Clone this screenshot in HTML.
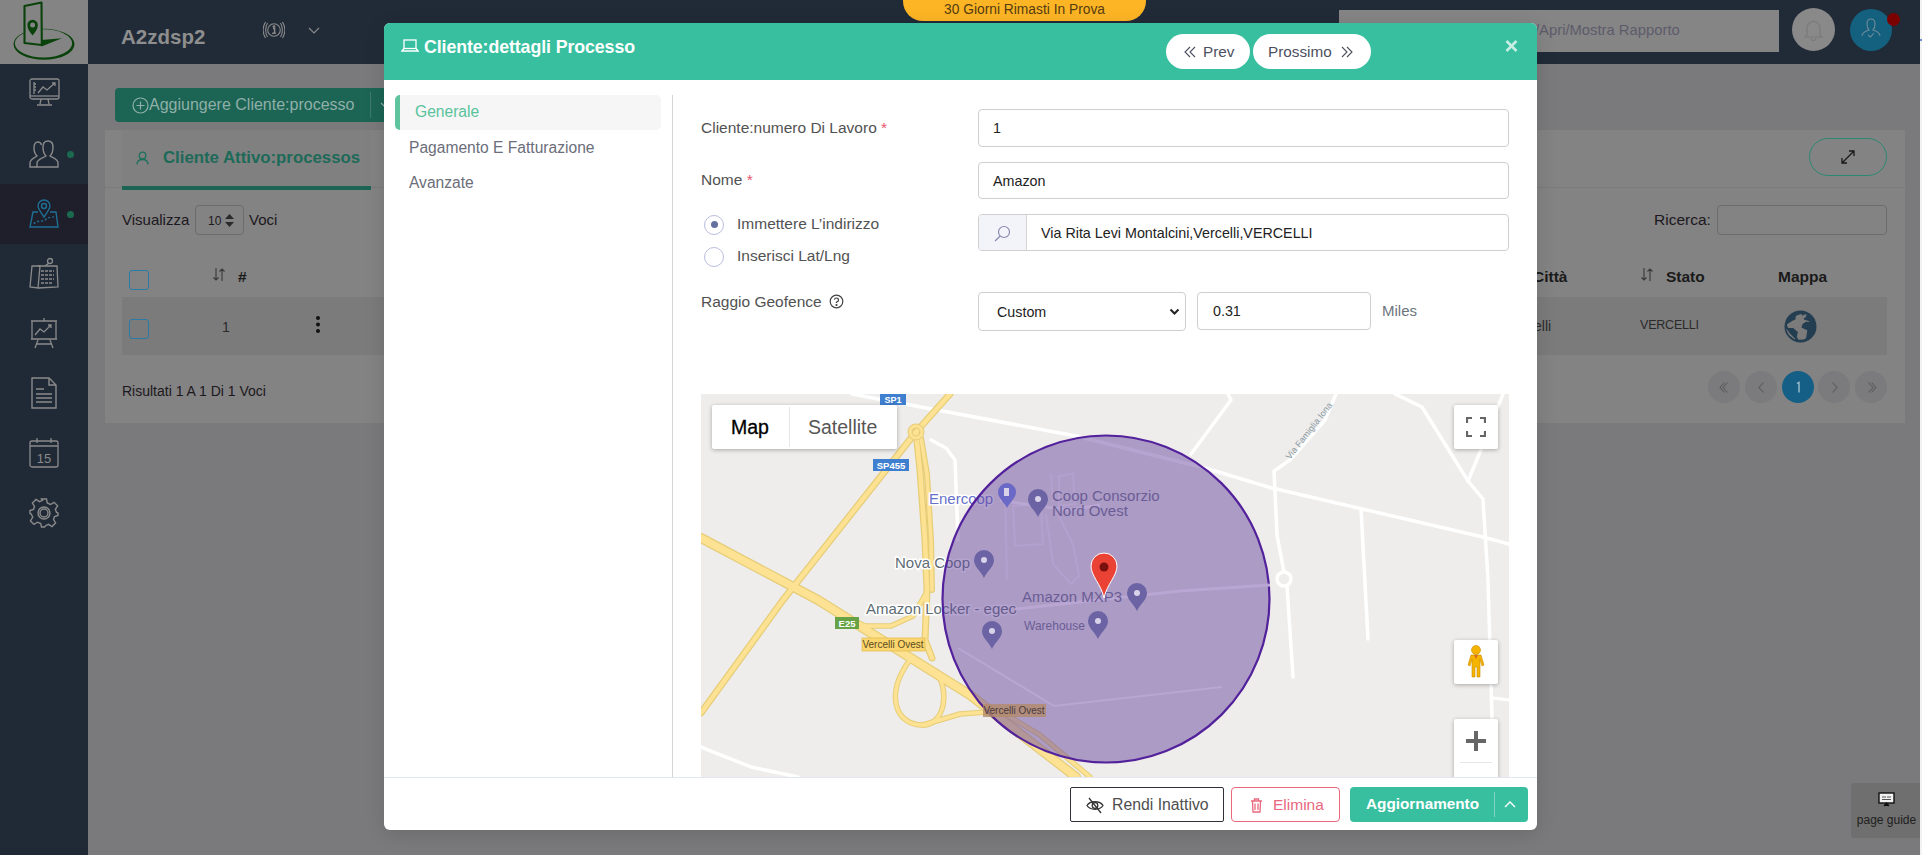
<!DOCTYPE html>
<html><head><meta charset="utf-8">
<style>
*{margin:0;padding:0;box-sizing:border-box}
html,body{width:1922px;height:855px;overflow:hidden}
body{position:relative;background:#7a7a7c;font-family:"Liberation Sans",sans-serif;color:#222}
.a{position:absolute}
#side{left:0;top:0;width:88px;height:855px;background:#202a37}
#logo{left:0;top:0;width:88px;height:64px;background:#848484}
#top{left:88px;top:0;width:1832px;height:64px;background:#212b38}
.sic{position:absolute;left:0;width:88px;height:60px}
.dot{position:absolute;width:7px;height:7px;border-radius:50%;background:#1b6a50}
#card{left:105px;top:130px;width:1800px;height:293px;background:#838383}
#modal{left:384px;top:23px;width:1153px;height:807px;background:#fff;border-radius:6px;overflow:hidden;box-shadow:0 4px 20px rgba(0,0,0,0.12)}
#mh{left:0;top:0;width:1153px;height:57px;background:#37bfa0}
.pg{width:32px;height:32px;border-radius:50%;background:#7b7b7d}
.pg span{position:absolute;left:0;top:5px;width:33px;text-align:center;font-size:18px;color:#6d6d6d}
.pill{height:35px;border-radius:18px;background:#fff}
.pill span{position:absolute;top:9px;font-size:15.3px;color:#4d5060;white-space:nowrap}
.nav{font-size:15.6px;color:#6b6e7a;white-space:nowrap}
.lbl{font-size:15.5px;color:#525252;white-space:nowrap}
.req{color:#e8546a}
.radio{width:20px;height:20px;border:1.2px solid #b9bddb;border-radius:50%}
.inp{border:1px solid #cfcfcf;border-radius:4px;background:#fff}
.inp span{position:absolute;top:10px;font-size:14.3px;color:#222;white-space:nowrap}
.mctl{background:#fff;border-radius:2px;box-shadow:0 1px 4px rgba(0,0,0,0.3)}
</style></head><body>
<div id="side" class="a">
 <div class="sic" style="top:64px"><svg class="a" style="left:29px;top:14px" width="31" height="30" viewBox="0 0 31 30" fill="none" stroke="#8a8a8a" stroke-width="1.3"><rect x="1" y="1" width="29" height="20" rx="2"/><line x1="1" y1="18" x2="30" y2="18"/><path d="M12 21 L11 26 M19 21 L20 26 M8 27 H23"/><path d="M9 15 L14 9 L18 12 L26 5 M23 5 H26 V8"/><path d="M5 4 V16 M5 6 H7 M5 9 H7 M5 12 H7"/></svg></div>
 <div class="sic" style="top:124px"><svg class="a" style="left:29px;top:16px" width="30" height="28" viewBox="0 0 30 28" fill="none" stroke="#8a8a8a" stroke-width="1.4"><path d="M8 27 H1 V23 C1 19 5 18 8 16 C6 14 5 12 5 8 C5 3 7 2 9 2 C11 2 12 3 12.5 5"/><path d="M8 27 H29 V23 C29 19 24 18 21 16 C23 14 24 11 24 7 C24 2 21 1 19 1 C16 1 14 3 14 7 C14 11 15 14 17 16 C14 18 8 19 8 23 Z"/></svg><div class="dot" style="left:67px;top:27px"></div></div>
 <div class="sic" style="top:184px;background:#1e1f2b"><svg class="a" style="left:29px;top:15px" width="31" height="30" viewBox="0 0 31 30" fill="none" stroke="#1f6f95" stroke-width="1.4"><path d="M15 18 C10 11 9 9 9 7 A6 6 0 0 1 21 7 C21 9 20 11 15 18 Z"/><circle cx="15" cy="7" r="2.5"/><path d="M9 13 H4 L1 28 H29 L27 13 H21"/><path d="M5 25 C8 20 14 24 17 20 C20 17 24 20 26 16" stroke-dasharray="2 2"/></svg><div class="dot" style="left:67px;top:27px"></div></div>
 <div class="sic" style="top:244px"><svg class="a" style="left:29px;top:13px" width="30" height="34" viewBox="0 0 30 34" fill="none" stroke="#8a8a8a" stroke-width="1.3"><path d="M3 9 L1 30 L9 31 L11 9 Z"/><path d="M9 9 H28 L29 30 L9 31"/><circle cx="21" cy="4" r="2.5"/><path d="M20 6 L16 9"/><path d="M12 14 H25 M12 18 H25 M12 22 H25 M12 26 H23" stroke-dasharray="3 1"/></svg></div>
 <div class="sic" style="top:304px"><svg class="a" style="left:29px;top:13px" width="30" height="32" viewBox="0 0 30 32" fill="none" stroke="#8a8a8a" stroke-width="1.3"><path d="M15 1 V4"/><path d="M2 4 H28 M3 4 V22 H27 V4 M2 22 H28"/><path d="M6 18 L11 12 L15 15 L22 8 M19 8 H22 V11"/><path d="M9 23 L6 31 M21 23 L24 31 M8 27 H22"/></svg></div>
 <div class="sic" style="top:364px"><svg class="a" style="left:31px;top:13px" width="26" height="32" viewBox="0 0 26 32" fill="none" stroke="#8a8a8a" stroke-width="1.4"><path d="M1 1 H18 L25 8 V31 H1 Z"/><path d="M18 1 V8 H25"/><path d="M5 12 H13 M5 17 H21 M5 21 H21 M5 25 H21"/></svg></div>
 <div class="sic" style="top:424px"><svg class="a" style="left:29px;top:13px" width="30" height="32" viewBox="0 0 30 32" fill="none" stroke="#8a8a8a" stroke-width="1.3"><rect x="1" y="4" width="28" height="26" rx="2"/><path d="M1 9 H29 M8 1 V6 M22 1 V6"/><text x="15" y="26" font-family="Liberation Sans" font-size="13" fill="#8a8a8a" stroke="none" text-anchor="middle">15</text></svg></div>
 <div class="sic" style="top:484px"><svg class="a" style="left:29px;top:14px" width="30" height="30" viewBox="0 0 30 30" fill="none" stroke="#8a8a8a" stroke-width="1.4"><path d="M12.5 1 H17.5 L18.3 5 L21.5 6.5 L25 4.3 L28.6 7.8 L26.3 11.3 L27.6 14.4 L29 15 V17.5 L25.5 18.5 L24.5 21.5 L26.6 25 L23 28.6 L19.5 26.4 L16.5 27.7 L15.5 29 H12.5 L11.7 25.5 L8.5 24.2 L5 26.4 L1.4 22.8 L3.7 19.3 L2.4 16.2 L1 15.5 V12.5 L4.5 11.5 L5.5 8.5 L3.4 5 L7 1.4 L10.5 3.6 L13.5 2.3 Z"/><circle cx="15" cy="15" r="6"/><circle cx="15" cy="15" r="4"/></svg></div>
</div>
<div id="logo" class="a"><svg class="a" style="left:12px;top:0px" width="64" height="62" viewBox="0 0 64 62"><path fill-rule="evenodd" fill="#0a420b" d="M1.5 44.2 A30.5 15.5 0 1 0 62.5 44.2 A30.5 15.5 0 1 0 1.5 44.2 Z M2.9 43.4 A28.6 14.1 0 1 0 60.1 43.4 A28.6 14.1 0 1 0 2.9 43.4 Z"/><path d="M12.5 6 L29.5 2.5 L29.8 45 L12.5 43 Z" fill="#848484" stroke="#0a420b" stroke-width="2.1" stroke-linejoin="round"/><path d="M29.5 40 L50 38.3 L29.5 46.5 Z" fill="#0a420b"/><path d="M20.6 35.6 C17.5 31.5 15.4 29 15.4 25 A5.2 5.2 0 0 1 25.8 25 C25.8 29 23.7 31.5 20.6 35.6 Z" fill="#0a420b"/><circle cx="20.6" cy="25" r="2.5" fill="#848484"/></svg></div>
<div id="top" class="a">
 <div class="a" style="left:33px;top:25px;font-size:20.5px;font-weight:bold;color:#8e8e8e;letter-spacing:0px">A2zdsp2</div>
 <svg class="a" style="left:175px;top:19px" width="22" height="22" viewBox="0 0 22 22" fill="none" stroke="#8a8a8a" stroke-width="1.1"><circle cx="11" cy="11" r="6.3"/><path d="M4.5 4 C2 8 2 14 4.5 18 M17.5 4 C20 8 20 14 17.5 18 M2.5 3 C-0.5 8 -0.5 14 2.5 19 M19.5 3 C22.5 8 22.5 14 19.5 19"/><circle cx="11" cy="7.6" r="0.9" fill="#8a8a8a"/><path d="M10 9.5 H11.6 V14 M9.2 14.3 H12.8" stroke-width="1.4"/></svg>
 <svg class="a" style="left:220px;top:27px" width="12" height="8" viewBox="0 0 12 8" fill="none" stroke="#8a8a8a" stroke-width="1.2"><path d="M1 1 L6 6 L11 1"/></svg>
 <div class="a" style="left:1251px;top:10px;width:440px;height:42px;background:#858585"><div class="a" style="left:196px;top:12px;font-size:14.8px;color:#5d5b6b;white-space:nowrap">/Apri/Mostra Rapporto</div></div>
 <div class="a" style="left:1704px;top:8px;width:43px;height:43px;border-radius:50%;background:#898989"><svg class="a" style="left:11px;top:11px" width="21" height="22" viewBox="0 0 21 22" fill="none" stroke="#7a7a7a" stroke-width="1.2"><path d="M10.5 1 V3 M4 16 V9 A6.5 6.5 0 0 1 17 9 V16 L19 18 H2 L4 16 Z M8 19 A2.5 2.5 0 0 0 13 19"/></svg></div>
 <div class="a" style="left:1762px;top:9px;width:42px;height:42px;border-radius:50%;background:#14607f"><svg class="a" style="left:11px;top:9px" width="20" height="22" viewBox="0 0 20 22" fill="none" stroke="#6e8c98" stroke-width="1.1"><path d="M10 1 C7 1 6 3 6 6 C6 9 7 11 8 12 C6 13 1 14 1 18 M10 1 C13 1 14 3 14 6 C14 9 13 11 12 12 C14 13 19 14 19 18"/><path d="M7 17 L9.5 19 L13 15"/></svg></div>
 <div class="a" style="left:1799px;top:13px;width:13px;height:13px;border-radius:50%;background:#7b0000"></div>
</div>
<div class="a" style="left:1920px;top:0;width:2px;height:855px;background:#f2f2f2"></div><div class="a" style="left:1920px;top:39px;width:2px;height:2px;background:#6a8fd6"></div>
<div class="a" style="left:903px;top:-20px;width:243px;height:41px;border-radius:0 0 20px 20px;background:#fdb525"><div class="a" style="left:0;top:22px;width:243px;text-align:center;font-size:13.8px;color:#553c10">30 Giorni Rimasti In Prova</div></div>

<div class="a" style="left:115px;top:88px;width:300px;height:34px;border-radius:4px;background:#1c6454"><svg class="a" style="left:17px;top:9px" width="17" height="17" viewBox="0 0 17 17" fill="none" stroke="#8fb0a8" stroke-width="1.2"><circle cx="8.5" cy="8.5" r="7.5"/><path d="M8.5 4.5 V12.5 M4.5 8.5 H12.5"/></svg><div class="a" style="left:34px;top:8px;font-size:16px;color:#8fb0a8;white-space:nowrap">Aggiungere Cliente:processo</div><div class="a" style="left:255px;top:4px;width:1px;height:26px;background:#3f7a6c"></div><svg class="a" style="left:265px;top:14px" width="10" height="7" viewBox="0 0 10 7" fill="none" stroke="#8fb0a8" stroke-width="1.1"><path d="M1 1 L5 5 L9 1"/></svg></div>
<div id="card" class="a">
 <div class="a" style="left:17px;top:0;width:249px;height:59px;background:#808080"></div>
 <div class="a" style="left:0;top:57px;width:1800px;height:1px;background:#7a7a7a"></div>
 <div class="a" style="left:17px;top:56px;width:249px;height:4px;background:#1c6454"></div>
 <svg class="a" style="left:31px;top:21px" width="13" height="14" viewBox="0 0 13 14" fill="none" stroke="#1d6f5a" stroke-width="1.3"><circle cx="6.5" cy="4.5" r="3.3"/><path d="M1 13.5 C1 9.5 3.5 8.5 6.5 8.5 C9.5 8.5 12 9.5 12 13.5"/></svg>
 <div class="a" style="left:58px;top:18px;font-size:16.8px;font-weight:bold;color:#1d6a58;white-space:nowrap">Cliente Attivo:processos</div>
 <div class="a" style="left:1704px;top:8px;width:78px;height:38px;border-radius:19px;border:1.3px solid #2a8870"><svg class="a" style="left:30px;top:10px" width="16" height="16" viewBox="0 0 16 16" fill="none" stroke="#1a1a1a" stroke-width="1.3"><path d="M2 14 L14 2 M9 2 H14 V7 M2 9 V14 H7"/></svg></div>
 <div class="a" style="left:17px;top:80.5px;font-size:15px;color:#1c1820">Visualizza</div>
 <div class="a" style="left:90px;top:75px;width:49px;height:30px;border:1px solid #6c6c6c;border-radius:4px"><div class="a" style="left:12px;top:8px;font-size:12px;color:#1c1820">10</div><svg class="a" style="left:29px;top:8px" width="9" height="13" viewBox="0 0 9 13" fill="#2a2a2a"><path d="M4.5 0 L9 5 H0 Z M0 8 H9 L4.5 13 Z"/></svg></div>
 <div class="a" style="left:144px;top:80.5px;font-size:15px;color:#1c1820">Voci</div>
 <div class="a" style="left:1549px;top:80.5px;font-size:15.5px;color:#1c1820">Ricerca:</div>
 <div class="a" style="left:1612px;top:75px;width:170px;height:30px;border:1px solid #6c6c6c;border-radius:4px"></div>
 <div class="a" style="left:24px;top:140px;width:20px;height:20px;border:1.5px solid #2a7aa8;border-radius:3px"></div>
 <svg class="a" style="left:107px;top:137px" width="14" height="15" viewBox="0 0 14 15" fill="none" stroke="#3a3a3a" stroke-width="1.1"><path d="M4 1 V13 M1.5 10.5 L4 13 L6.5 10.5 M10 14 V2 M7.5 4.5 L10 2 L12.5 4.5"/></svg>
 <div class="a" style="left:133px;top:138px;font-size:15.5px;font-weight:bold;color:#1a1a1a">#</div>
 <div class="a" style="left:1428px;top:138px;font-size:15.5px;font-weight:bold;color:#1a1a1a">Città</div>
 <svg class="a" style="left:1535px;top:137px" width="14" height="15" viewBox="0 0 14 15" fill="none" stroke="#3a3a3a" stroke-width="1.1"><path d="M4 1 V13 M1.5 10.5 L4 13 L6.5 10.5 M10 14 V2 M7.5 4.5 L10 2 L12.5 4.5"/></svg>
 <div class="a" style="left:1561px;top:138px;font-size:15.5px;font-weight:bold;color:#1a1a1a">Stato</div>
 <div class="a" style="left:1673px;top:138px;font-size:15.5px;font-weight:bold;color:#1a1a1a">Mappa</div>
 <div class="a" style="left:17px;top:167px;width:1765px;height:58px;background:#7b7b7b"></div>
 <div class="a" style="left:24px;top:189px;width:20px;height:20px;border:1.5px solid #2a7aa8;border-radius:3px"></div>
 <div class="a" style="left:117px;top:189px;font-size:14px;color:#2a2a2a">1</div>
 <svg class="a" style="left:210px;top:185px" width="6" height="19" viewBox="0 0 6 19" fill="#111"><circle cx="3" cy="3" r="2"/><circle cx="3" cy="9.5" r="2"/><circle cx="3" cy="16" r="2"/></svg>
 <div class="a" style="left:1422px;top:188px;font-size:14px;color:#2a2a2a">celli</div>
 <div class="a" style="left:1535px;top:188px;font-size:12.5px;color:#2a2a2a;letter-spacing:-0.2px">VERCELLI</div>
 <svg class="a" style="left:1678.5px;top:179.5px" width="33" height="33" viewBox="0 0 33 33"><circle cx="16.5" cy="16.5" r="16" fill="#243e51"/><path d="M2.8 14.5 L8.1 11 L11.6 9.2 L11.6 6.3 L13.9 5.1 L17.4 3.95 L18.6 5.7 L20.4 4.5 L22.7 4.5 L21.5 7.5 L19.8 8 L20.1 9.8 L23.3 10.4 L26.2 12.1 L22.1 11.8 L18.6 13.9 L17.4 17.4 L20.9 19.2 L23.3 20.3 L22.1 27.9 L19.8 29.4 L14.5 29.7 L12.8 26.8 L13.9 22.1 L9.2 18 L4 18 Z" fill="#7b7b7b"/><path d="M2.3 18.5 L5.7 23.2 L11.3 29 L10.2 29.2 L5 25 L2.8 21 Z" fill="#7b7b7b"/></svg>
 <div class="a" style="left:17px;top:253px;font-size:14px;color:#1c1820">Risultati 1 A 1 Di 1 Voci</div>
 <div class="a pg" style="left:1603px;top:241px"><svg class="a" style="left:8px;top:8px" width="17" height="17" viewBox="0 0 17 17" fill="none" stroke="#5c5c5e" stroke-width="1.1"><path d="M8.5 3.5 L4 8.5 L8.5 13.5 M11.5 3.5 L7 8.5 L11.5 13.5"/></svg></div><div class="a pg" style="left:1640px;top:241px"><svg class="a" style="left:8px;top:8px" width="17" height="17" viewBox="0 0 17 17" fill="none" stroke="#5c5c5e" stroke-width="1.1"><path d="M10.5 3.5 L6 8.5 L10.5 13.5"/></svg></div><div class="a pg" style="left:1677px;top:241px;background:#155f86"><svg class="a" style="left:8px;top:8px" width="17" height="17" viewBox="0 0 17 17" fill="none" stroke="#8fb3c6" stroke-width="1.6"><path d="M7 4.5 L9 3.5 V13.5"/></svg></div><div class="a pg" style="left:1713px;top:241px"><svg class="a" style="left:8px;top:8px" width="17" height="17" viewBox="0 0 17 17" fill="none" stroke="#5c5c5e" stroke-width="1.1"><path d="M6.5 3.5 L11 8.5 L6.5 13.5"/></svg></div><div class="a pg" style="left:1750px;top:241px"><svg class="a" style="left:8px;top:8px" width="17" height="17" viewBox="0 0 17 17" fill="none" stroke="#5c5c5e" stroke-width="1.1"><path d="M5.5 3.5 L10 8.5 L5.5 13.5 M8.5 3.5 L13 8.5 L8.5 13.5"/></svg></div>
</div>
<div class="a" style="left:1851px;top:783px;width:69px;height:55px;background:#6f6f6f;border-radius:3px 0 0 3px"><svg class="a" style="left:27px;top:9px" width="17" height="15" viewBox="0 0 17 15"><rect x="1" y="1" width="15" height="10" fill="#f2f2f2" stroke="#111" stroke-width="1.4"/><path d="M4 5 H8 M9 5 H13 M4 7.5 H13" stroke="#555" stroke-width="1"/><path d="M8.5 11 V14 M6 14 L8.5 11 L11 14" stroke="#111" stroke-width="1.2"/></svg><div class="a" style="left:0;top:30px;width:71px;text-align:center;font-size:12px;color:#1e1e1e;white-space:nowrap">page guide</div></div>

<div id="modal" class="a">
  <div id="mh" class="a">
   <svg class="a" style="left:17px;top:16px" width="18" height="13" viewBox="0 0 18 13" fill="none" stroke="#fff" stroke-width="1.3"><rect x="3" y="1" width="12" height="8.5"/><path d="M3 9.5 L0.8 12 H17.2 L15 9.5"/></svg>
   <div class="a" style="left:40px;top:14px;font-size:17.8px;font-weight:bold;color:#fff;white-space:nowrap;letter-spacing:-0.1px">Cliente:dettagli Processo</div>
   <div class="a pill" style="left:782px;top:11px;width:84px"><svg class="a" style="left:18px;top:12px" width="12" height="12" viewBox="0 0 12 12" fill="none" stroke="#4d5060" stroke-width="1.1"><path d="M6 1 L1 6 L6 11 M11 1 L6 6 L11 11"/></svg><span style="left:37px">Prev</span></div>
   <div class="a pill" style="left:869px;top:11px;width:118px"><span style="left:15px">Prossimo</span><svg class="a" style="left:88px;top:12px" width="12" height="12" viewBox="0 0 12 12" fill="none" stroke="#4d5060" stroke-width="1.1"><path d="M1 1 L6 6 L1 11 M6 1 L11 6 L6 11"/></svg></div>
   <svg class="a" style="left:1121px;top:16px" width="13" height="14" viewBox="0 0 13 14" fill="none" stroke="#c8eee4" stroke-width="2.6"><path d="M1.5 2 L11.5 12 M11.5 2 L1.5 12"/></svg>
  </div>
  <div class="a" style="left:11px;top:72px;width:266px;height:35px;background:#f6f6f6;border-radius:5px;overflow:hidden"><div class="a" style="left:0;top:0;width:5px;height:35px;background:#5ec4a0"></div></div>
  <div class="a nav" style="left:31px;top:80px;color:#58c39d">Generale</div>
  <div class="a nav" style="left:25px;top:116px">Pagamento E Fatturazione</div>
  <div class="a nav" style="left:25px;top:151px">Avanzate</div>
  <div class="a" style="left:288px;top:72px;width:1px;height:682px;background:#d4d4d4"></div>
  <div class="a lbl" style="left:317px;top:96px">Cliente:numero Di Lavoro <span class="req">*</span></div>
  <div class="a inp" style="left:594px;top:86px;width:531px;height:38px"><span style="left:14px">1</span></div>
  <div class="a lbl" style="left:317px;top:148px">Nome <span class="req">*</span></div>
  <div class="a inp" style="left:594px;top:139px;width:531px;height:37px"><span style="left:14px">Amazon</span></div>
  <div class="a radio" style="left:320px;top:191.5px"><div class="a" style="left:5.5px;top:5.5px;width:7px;height:7px;border-radius:50%;background:#6370a0"></div></div>
  <div class="a lbl" style="left:353px;top:192px">Immettere L&#8217;indirizzo</div>
  <div class="a radio" style="left:320px;top:223.5px"></div>
  <div class="a lbl" style="left:353px;top:224px">Inserisci Lat/Lng</div>
  <div class="a inp" style="left:594px;top:191px;width:531px;height:37px;overflow:hidden"><div class="a" style="left:0;top:0;width:48px;height:37px;background:#f3f4f9;border-right:1px solid #d6d6d6"></div><svg class="a" style="left:15px;top:10px" width="17" height="17" viewBox="0 0 17 17" fill="none" stroke="#8a8ab0" stroke-width="1.2"><circle cx="10" cy="7" r="5.5"/><path d="M6.2 11 L1 16"/></svg><span style="left:62px">Via Rita Levi Montalcini,Vercelli,VERCELLI</span></div>
  <div class="a lbl" style="left:317px;top:270px">Raggio Geofence</div>
  <svg class="a" style="left:445px;top:271px" width="15" height="15" viewBox="0 0 15 15" fill="none" stroke="#444" stroke-width="1.2"><circle cx="7.5" cy="7.5" r="6.3"/><path d="M5.5 5.8 A2 2 0 1 1 7.5 8 V9" /><circle cx="7.5" cy="11" r="0.5" fill="#444"/></svg>
  <div class="a inp" style="left:594px;top:269px;width:208px;height:39px"><span style="left:18px;top:11px">Custom</span><svg class="a" style="left:190px;top:15px" width="11" height="8" viewBox="0 0 11 8" fill="none" stroke="#222" stroke-width="2"><path d="M1.5 1.5 L5.5 5.5 L9.5 1.5"/></svg></div>
  <div class="a inp" style="left:813px;top:269px;width:174px;height:38px"><span style="left:15px;top:10px">0.31</span></div>
  <div class="a" style="left:998px;top:279px;font-size:15px;color:#6c757d">Miles</div>
  <div id="map" class="a" style="left:317px;top:371px;width:808px;height:383px;background:#eeedeb;overflow:hidden"><svg class="a" style="left:0;top:0" width="808" height="383" viewBox="0 0 808 383">
<g fill="none" stroke-linecap="round" stroke-linejoin="round">
 <!-- white minor roads -->
 <g stroke="#ffffff" stroke-width="3.5">
  <polyline points="151.0,0.0 204.0,10.0 375.0,42.0 504.0,74.0 571.0,94.0 782.0,143.0 808.0,150.0"/>
  <polyline points="635.0,0.0 624.0,26.0 589.0,66.0 573.0,77.0 576.0,141.0 583.0,178.0"/>
  <polyline points="586.0,192.0 592.0,283.0"/>
  <circle cx="583" cy="185" r="7"/>
  <polyline points="660.0,115.0 667.0,245.0"/>
  <polyline points="694.0,0.0 721.0,13.0 767.0,87.0 782.0,105.0 787.0,186.0 791.0,324.0"/>
  <polyline points="767.0,87.0 784.0,46.0 802.0,0.0"/>
  <polyline points="527.0,0.0 530.0,6.0 490.0,60.0"/>
  <polyline points="0.0,353.0 50.0,373.0 97.0,383.0"/>
  <polyline points="792.0,304.0 808.0,306.0" stroke-width="3"/>
  <polyline points="230.0,46.0 245.0,54.0 254.0,66.0 257.0,146.0"/>
 </g>
 <!-- yellow highways: outline then fill -->
 
 <g stroke="#e6cd78">
  <polyline points="0,144 117,206 269,301 375,383" stroke-width="10"/><polyline points="249,0 215,38 82,206 0,319" stroke-width="7"/><polyline points="215,38 219,76 224,146 226,196 224,246 231,264" stroke-width="7"/><polyline points="220,44 226,80 230,146 231,196" stroke-width="6"/><polyline points="226,198 212,222 190,232 165,232 139,223" stroke-width="5.5"/><path d="M235 278 C249 296 244 331 222 331 C194 331 184 301 208 267" stroke-width="5.5"/><polyline points="222,331 259,320 299,317 339,341 389,383" stroke-width="5.5"/>
 </g>
 <g stroke="#fde293">
  <polyline points="0,144 117,206 269,301 375,383" stroke-width="7.5"/><polyline points="249,0 215,38 82,206 0,319" stroke-width="4.5"/><polyline points="215,38 219,76 224,146 226,196 224,246 231,264" stroke-width="4.5"/><polyline points="220,44 226,80 230,146 231,196" stroke-width="3.5"/><polyline points="226,198 212,222 190,232 165,232 139,223" stroke-width="3.5"/><path d="M235 278 C249 296 244 331 222 331 C194 331 184 301 208 267" stroke-width="3.5"/><polyline points="222,331 259,320 299,317 339,341 389,383" stroke-width="3.5"/>
 </g>
 <circle cx="215" cy="38" r="6" stroke="#e6cd78" stroke-width="5"/>
 <circle cx="215" cy="38" r="6" stroke="#fde293" stroke-width="3"/>
</g>
<!-- shields -->
<rect x="179" y="0" width="26" height="11" fill="#3f7fcf"/><text x="192" y="9" font-size="9" font-weight="bold" fill="#fff" text-anchor="middle" font-family="Liberation Sans">SP1</text>
<rect x="172" y="65" width="36" height="12" fill="#3f7fcf"/><text x="190" y="75" font-size="9.5" font-weight="bold" fill="#fff" text-anchor="middle" font-family="Liberation Sans">SP455</text>
<rect x="134" y="223" width="24" height="12" fill="#67a346"/><text x="146" y="233" font-size="9.5" font-weight="bold" fill="#fff" text-anchor="middle" font-family="Liberation Sans">E25</text>
<rect x="161" y="244" width="63" height="13" fill="#fbd66e" stroke="#e4bd4f" stroke-width="0.8"/><text x="192" y="254" font-size="10" fill="#5a4a20" text-anchor="middle" font-family="Liberation Sans">Vercelli Ovest</text>
<!-- POI labels outside circle -->
<g font-family="Liberation Sans" font-size="15" fill="#5e6c74">
 <text x="165" y="220" stroke="#fff" stroke-width="3" paint-order="stroke">Amazon Locker - egeo</text>
 <text x="194" y="174" stroke="#fff" stroke-width="3" paint-order="stroke">Nova Coop</text>
 <text x="228" y="110" fill="#6671c9" stroke="#fff" stroke-width="3" paint-order="stroke">Enercoop</text>
</g>
<!-- circle -->
<circle cx="405" cy="205" r="163.5" fill="#6a4a9f" fill-opacity="0.5" stroke="#52219b" stroke-width="2.2"/>
<rect x="282" y="310" width="63" height="13" fill="#b38a6a" fill-opacity="0.8"/><text x="313" y="320" font-size="10" fill="#4a3a40" text-anchor="middle" font-family="Liberation Sans">Vercelli Ovest</text>
<g stroke="#b3a0cf" stroke-width="2" fill="none">
 <path d="M304 92 L306 186 M312 112 L340 110 L342 150 L314 152 Z M350 80 L352 108 M358 82 L372 80 L374 110 L358 112 Z M345 120 L352 170 L370 190 L378 182 L372 150 L356 118"/>
</g>
<g stroke="#b9a6d3" stroke-width="3" fill="none">
 <polyline points="299.0,106.0 329.0,111.0 369.0,116.0 399.0,111.0"/>
 <polyline points="314,215 479,197 569,191"/>
 <polyline points="257,254 353,312 521,293" stroke-width="2"/>
</g>
<!-- pins -->

<g fill="#6b63a3">
 <path transform="translate(337 106)" d="M0 -11 A10 10 0 0 1 10 -1 C10 6 3 10 0 17 C-3 10 -10 6 -10 -1 A10 10 0 0 1 0 -11 Z"/>
 <path transform="translate(283 167)" d="M0 -11 A10 10 0 0 1 10 -1 C10 6 3 10 0 17 C-3 10 -10 6 -10 -1 A10 10 0 0 1 0 -11 Z"/>
 <path transform="translate(291 238)" d="M0 -11 A10 10 0 0 1 10 -1 C10 6 3 10 0 17 C-3 10 -10 6 -10 -1 A10 10 0 0 1 0 -11 Z"/>
 <path transform="translate(436 200)" d="M0 -11 A10 10 0 0 1 10 -1 C10 6 3 10 0 17 C-3 10 -10 6 -10 -1 A10 10 0 0 1 0 -11 Z"/>
 <path transform="translate(397 228)" d="M0 -11 A10 10 0 0 1 10 -1 C10 6 3 10 0 17 C-3 10 -10 6 -10 -1 A10 10 0 0 1 0 -11 Z"/>
</g>
<path d="M306 89 A9 9 0 0 1 315 98 C315 104 309 108 306 114 C303 108 297 104 297 98 A9 9 0 0 1 306 89 Z" fill="#6b69c7"/>
<g fill="#d9d3ea">
 <circle cx="337" cy="105" r="3"/><circle cx="283" cy="166" r="3"/><circle cx="291" cy="237" r="3"/><circle cx="436" cy="199" r="3"/><circle cx="397" cy="227" r="3"/>
 <rect x="303" y="94" width="5" height="8"/>
</g>
<g font-family="Liberation Sans" font-size="15" fill="#6a5d95">
 <text x="351" y="107">Coop Consorzio</text>
 <text x="351" y="122">Nord Ovest</text>
 <text x="321" y="208">Amazon MXP3</text>
 <text x="323" y="236" font-size="12">Warehouse</text>
</g>
<text x="589" y="66" font-family="Liberation Sans" font-size="9" fill="#8a9aa5" transform="rotate(-52 589 66)">Via Famiglia Iona</text>
<!-- red marker -->
<path d="M403 159 A13 13 0 0 1 416 172 C416 182 406 190 403 204 C400 190 390 182 390 172 A13 13 0 0 1 403 159 Z" fill="#ea4335" stroke="#fff" stroke-width="1"/>
<circle cx="403" cy="173" r="4.5" fill="#7a1010"/>
</svg>
<div class="a mctl" style="left:11px;top:11px;width:185px;height:44px"><div class="a" style="left:19px;top:11px;font-size:19.5px;font-weight:normal;color:#000;-webkit-text-stroke:0.3px #000">Map</div><div class="a" style="left:77px;top:2px;width:1px;height:40px;background:#e6e6e6"></div><div class="a" style="left:96px;top:11px;font-size:19.5px;color:#565656">Satellite</div></div>
<div class="a mctl" style="left:753px;top:11px;width:44px;height:44px"><svg class="a" style="left:12px;top:12px" width="20" height="20" viewBox="0 0 20 20" fill="none" stroke="#666" stroke-width="2.2"><path d="M1 6 V1 H6 M14 1 H19 V6 M19 14 V19 H14 M6 19 H1 V14"/></svg></div>
<div class="a mctl" style="left:753px;top:246px;width:44px;height:44px"><svg class="a" style="left:13px;top:5px" width="18" height="33" viewBox="0 0 18 33"><circle cx="9" cy="5" r="4.5" fill="#f5b400" stroke="#c98a00" stroke-width="0.6"/><path d="M4 10 H14 L17 20 L15 21 L13 14 V32 H10 V22 H8 V32 H5 V14 L3 21 L1 20 Z" fill="#f5b400" stroke="#c98a00" stroke-width="0.6"/><path d="M7 10 L9 14 L11 10 Z" fill="#d86b22"/></svg></div>
<div class="a mctl" style="left:753px;top:325px;width:44px;height:70px"><svg class="a" style="left:12px;top:12px" width="20" height="20" viewBox="0 0 20 20"><path d="M8 0 H12 V8 H20 V12 H12 V20 H8 V12 H0 V8 H8 Z" fill="#666"/></svg><div class="a" style="left:6px;top:43px;width:32px;height:1px;background:#e6e6e6"></div></div>
</div>
  <div class="a" style="left:0;top:754px;width:1153px;height:1px;background:#e2e7ee"></div>
  <div class="a" style="left:686px;top:764px;width:154px;height:35px;border:1.3px solid #2f3138;border-radius:2px"><svg class="a" style="left:15px;top:9px" width="18" height="17" viewBox="0 0 18 17" fill="none" stroke="#333" stroke-width="1.3"><path d="M1 8.5 C4 3.5 14 3.5 17 8.5 C14 13.5 4 13.5 1 8.5 Z"/><circle cx="9" cy="8.5" r="2.8"/><path d="M3 1 L15 16"/></svg><div class="a" style="left:41px;top:8px;font-size:15.8px;color:#4f4f4f;white-space:nowrap">Rendi Inattivo</div></div>
  <div class="a" style="left:847px;top:764px;width:109px;height:35px;border:1.3px solid #e9687e;border-radius:4px"><svg class="a" style="left:18px;top:10px" width="13" height="15" viewBox="0 0 13 15" fill="none" stroke="#e9687e" stroke-width="1.3"><path d="M1 3 H12 M4.5 3 V1 H8.5 V3 M2.5 3 L3 14 H10 L10.5 3 M5 5.5 V12 M8 5.5 V12"/></svg><div class="a" style="left:41px;top:8px;font-size:15.5px;color:#e9687e;white-space:nowrap">Elimina</div></div>
  <div class="a" style="left:966px;top:764px;width:178px;height:35px;background:#37bfa0;border-radius:4px"><div class="a" style="left:16px;top:8px;font-size:15.3px;font-weight:bold;color:#fff;white-space:nowrap">Aggiornamento</div><div class="a" style="left:144px;top:5px;width:1px;height:25px;background:#7fd6c2"></div><svg class="a" style="left:154px;top:13px" width="12" height="8" viewBox="0 0 12 8" fill="none" stroke="#fff" stroke-width="1.4"><path d="M1 7 L6 2 L11 7"/></svg></div>
</div>
</body></html>
